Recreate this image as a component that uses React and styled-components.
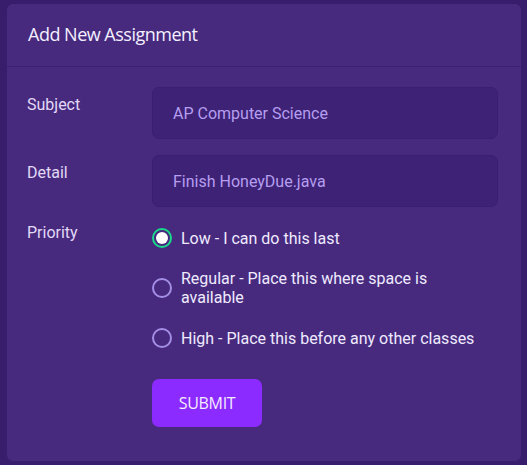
import React, { useState } from 'react'
import styled, { createGlobalStyle } from 'styled-components'

const GlobalStyle = createGlobalStyle`
  html, body {
    margin: 0;
    padding: 0;
    background: #371d6c;
    font-family: Roboto, "Liberation Sans", sans-serif;
  }
`

const Page = styled.div`
  padding: 4px 6px 4px 7px;
`

const Card = styled.section`
  background: #472a7e;
  border-radius: 6px;
  height: 457px;
  box-sizing: border-box;
`

const Header = styled.header`
  height: 62px;
  padding: 0 21px;
  display: flex;
  align-items: center;
  border-bottom: 1px solid #3b1f70;
  h2 {
    margin: 0 0 3px;
    line-height: 1;
    font-family: "Open Sans", sans-serif;
    font-weight: 400;
    font-size: 18px;
    letter-spacing: -0.5px;
    color: #f4f0ff;
  }
`

const Form = styled.form`
  padding: 20px 19px 0 20px;
  display: flex;
  flex-direction: column;
  gap: 16px;
`

const Row = styled.div`
  display: grid;
  grid-template-columns: 125px 1fr;
  align-items: start;
`

const Label = styled.label`
  color: #e2d9f7;
  font-size: 16px;
  line-height: 19px;
  padding-top: ${p => p.$pt ?? 8}px;
`

const Input = styled.input`
  box-sizing: border-box;
  height: 52px;
  width: 346px;
  background: #3e2276;
  border: 1px solid #3a1f70;
  border-radius: 7px;
  padding: 0 20px;
  font-family: Roboto, sans-serif;
  font-size: 16px;
  color: #b59ef0;
  outline: none;
  &::placeholder { color: #b59ef0; }
`

const Options = styled.div`
  display: flex;
  flex-direction: column;
  gap: 21px;
  padding-top: 5px;
`

const Option = styled.label`
  display: flex;
  align-items: center;
  gap: 9px;
  color: #efeaff;
  font-size: 16px;
  line-height: 19px;
  cursor: pointer;
  span { max-width: 302px; }
`

const Radio = styled.span`
  flex: none;
  box-sizing: border-box;
  width: 20px;
  height: 20px;
  border-radius: 50%;
  border: 2px solid ${p => (p.$on ? '#19d98a' : '#a48fe6')};
  display: flex;
  align-items: center;
  justify-content: center;
  &::after {
    content: '';
    width: 12px;
    height: 12px;
    border-radius: 50%;
    background: #fff;
    display: ${p => (p.$on ? 'block' : 'none')};
  }
`

const Submit = styled.button`
  margin-top: 31px;
  width: 110px;
  height: 48px;
  background: #8c2bff;
  border: none;
  border-radius: 7px;
  color: #f4ecff;
  font-family: "Open Sans", sans-serif;
  font-size: 16px;
  letter-spacing: -0.3px;
`

const priorities = [
  'Low - I can do this last',
  'Regular - Place this where space is available',
  'High - Place this before any other classes',
]

const App = () => {
  const [pick, setPick] = useState(0)
  return (
    <Page>
      <GlobalStyle />
      <Card>
        <Header>
          <h2>Add New Assignment</h2>
        </Header>
        <Form onSubmit={e => e.preventDefault()}>
          <Row>
            <Label $pt={8}>Subject</Label>
            <Input placeholder="AP Computer Science" />
          </Row>
          <Row>
            <Label $pt={8}>Detail</Label>
            <Input placeholder="Finish HoneyDue.java" />
          </Row>
          <Row>
            <Label $pt={0}>Priority</Label>
            <div>
              <Options>
                {priorities.map((t, i) => (
                  <Option key={i} onClick={() => setPick(i)}>
                    <Radio $on={pick === i} />
                    <span>{t}</span>
                  </Option>
                ))}
              </Options>
              <Submit type="submit">SUBMIT</Submit>
            </div>
          </Row>
        </Form>
      </Card>
    </Page>
  )
}

export default App
